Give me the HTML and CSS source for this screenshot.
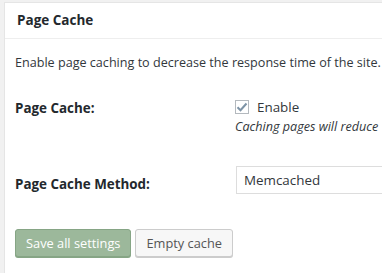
FILE: index.html
```html
<!DOCTYPE html>
<html lang="en">
<head>
    <meta charset="UTF-8">
    <meta name="viewport" content="width=device-width, initial-scale=1.0">
    <title>Page Cache</title>
    <link rel="stylesheet" href="styles.css">
</head>
<body>
    <div class="postbox">
        <h3 class="postbox-title">Page Cache</h3>
        <div class="inside">
            <p class="intro">Enable page caching to decrease the response time of the site.</p>

            <div class="form-row">
                <div class="row-label">Page Cache:</div>
                <div class="row-field">
                    <label class="check">
                        <span class="check-box">
                            <svg width="12" height="10" viewBox="0 0 12 10">
                                <path d="M1.5 5.2 L4.5 8.2 L10.5 1.5" fill="none" stroke="#7d93a6" stroke-width="2"/>
                            </svg>
                        </span>
                        Enable
                    </label>
                    <p class="description">Caching pages will reduce</p>
                </div>
            </div>

            <div class="form-row row-method">
                <div class="row-label">Page Cache Method:</div>
                <div class="row-field">
                    <div class="select">Memcached</div>
                </div>
            </div>

            <div class="actions">
                <button type="submit" class="button button-primary">Save all settings</button>
                <button type="button" class="button">Empty cache</button>
            </div>
        </div>
    </div>
</body>
</html>
```

FILE: styles.css
```css
:root {
    --color-bg: #f1f1f1;
    --color-border: #e5e5e5;
    --color-text: #32373c;
    --color-title: #23282d;
}

body {
    margin: 0;
    padding: 2px 0 0 4px;
    background-color: var(--color-bg);
    font-family: "Open Sans", sans-serif;
    font-size: 12.6px;
    color: var(--color-text);
    overflow: hidden;
}

.postbox {
    width: 378px;
    height: 271px;
    background-color: #fff;
    border: 1px solid var(--color-border);
    border-right: 0;
    border-bottom: 0;
    box-sizing: border-box;
    overflow: hidden;
}

.postbox-title {
    margin: 0;
    padding: 0 12px;
    height: 35px;
    line-height: 34px;
    font-size: 13.5px;
    font-weight: 700;
    color: var(--color-title);
    border-bottom: 1px solid #eee;
}

.inside {
    padding: 0 0 0 10px;
}

.intro {
    margin: 0;
    padding-top: 15px;
    line-height: 18px;
    white-space: nowrap;
}

.form-row {
    display: flex;
    margin-top: 22px;
}

.row-label {
    width: 220px;
    flex-shrink: 0;
    font-weight: 700;
    font-size: 13.4px;
    color: var(--color-title);
    line-height: 18px;
    padding-top: 5px;
}

.row-field {
    flex: 1;
    white-space: nowrap;
}

.check {
    display: flex;
    align-items: center;
    gap: 8px;
    height: 25px;
    font-size: 13.4px;
}

.check-box {
    width: 14px;
    height: 14px;
    border: 1px solid #b4b9be;
    box-sizing: border-box;
    display: flex;
    align-items: center;
    justify-content: center;
    background-color: #fff;
}

.description {
    margin: 0;
    font-style: italic;
    line-height: 16px;
}

.row-method {
    margin-top: 31px;
}

.row-method .row-label {
    padding-top: 9px;
}

.select {
    height: 28px;
    line-height: 26px;
    box-sizing: border-box;
    border: 1px solid #ddd;
    border-right: 0;
    padding: 0 7px;
    font-size: 13.4px;
    margin-left: 1px;
}

.actions {
    display: flex;
    gap: 4px;
    margin-top: 35px;
}

.button {
    height: 28px;
    padding: 0 10px;
    font-family: inherit;
    font-size: 12.8px;
    color: #555;
    background-color: #f7f7f7;
    border: 1px solid #ccc;
    border-radius: 3px;
    box-shadow: 0 1px 0 #ccc;
}

.button-primary {
    color: #fff;
    background-color: #9cb89b;
    border-color: #86a585;
    box-shadow: 0 1px 0 #86a585;
}
```
